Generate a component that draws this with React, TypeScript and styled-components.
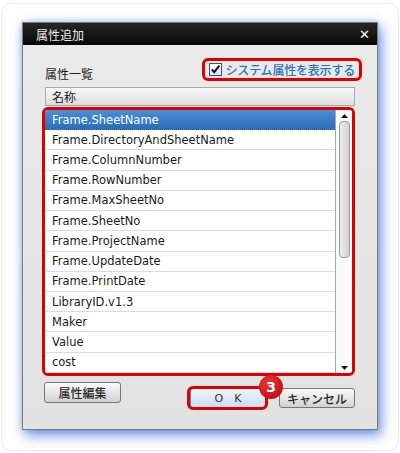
import React from "react";
import styled, { createGlobalStyle } from "styled-components";

const GlobalStyle = createGlobalStyle`
  html, body {
    margin: 0;
    padding: 0;
    background: #ffffff;
  }
  body {
    font-family: "DejaVu Sans", "Noto Sans CJK JP", sans-serif;
  }
`;

const Page = styled.div`
  width: 398px;
  height: 448px;
  margin: 3px 0 0 1px;
  box-sizing: border-box;
  border: 1px solid #ececec;
  border-radius: 10px;
  padding: 18px 0 0 20px;
`;

const Dialog = styled.div`
  width: 356px;
  box-sizing: border-box;
  border: 1px solid #7a7a7a;
  background: #e6e6e6;
  box-shadow: 3px 5px 12px rgba(60, 110, 210, 0.75), 0 0 6px rgba(90, 130, 210, 0.35);
  display: flex;
  flex-direction: column;
`;

const TitleBar = styled.div`
  height: 22px;
  background: linear-gradient(#262626, #080808);
  display: flex;
  align-items: center;
  justify-content: space-between;
  padding: 0 7px 0 13px;
  color: #ececec;
  font-family: "Noto Sans CJK JP", sans-serif;
  font-size: 12px;
`;

const Close = styled.span`
  font-family: "DejaVu Sans", sans-serif;
  font-weight: bold;
  font-size: 13px;
  color: #ffffff;
`;

const Body = styled.div`
  padding: 13px 22px 21px 19px;
  display: flex;
  flex-direction: column;
  background: linear-gradient(#eaeaea, #e2e2e2);
`;

const TopRow = styled.div`
  display: flex;
  justify-content: space-between;
  align-items: flex-end;
  margin-right: -7px;
`;

const Label = styled.div`
  font-family: "Noto Sans CJK JP", sans-serif;
  font-size: 12px;
  color: #222;
  padding-left: 3px;
  margin-bottom: -1px;
`;

const RedFrame = styled.div`
  border: 3px solid #dd0000;
  border-radius: 6px;
`;

const CheckFrame = styled(RedFrame)`
  height: 23px;
  box-sizing: border-box;
  display: flex;
  align-items: center;
  gap: 4px;
  padding: 0 4px 0 4px;
`;

const CheckBox = styled.span`
  width: 13px;
  height: 13px;
  box-sizing: border-box;
  border: 1px solid #2c5584;
  background: linear-gradient(#ffffff, #dbe6f3);
  display: flex;
  align-items: center;
  justify-content: center;
`;

const CheckText = styled.span`
  font-family: "Noto Sans CJK JP", sans-serif;
  font-size: 12px;
  font-weight: 500;
  color: #2a6fc0;
  letter-spacing: -0.2px;
`;

const Header = styled.div`
  margin: 6px 0 0 3px;
  height: 19px;
  box-sizing: border-box;
  border: 1px solid #a9a9a9;
  background: linear-gradient(#f9f9f9, #dedede);
  display: flex;
  align-items: center;
  padding-left: 6px;
  font-family: "Noto Sans CJK JP", sans-serif;
  font-size: 12px;
  color: #222;
`;

const ListFrame = styled(RedFrame)`
  margin-top: 1px;
  height: 269px;
  box-sizing: border-box;
  display: flex;
  background: #ffffff;
  overflow: hidden;
`;

const Rows = styled.div`
  flex: 1;
  display: flex;
  flex-direction: column;
`;

const Row = styled.div<{ $selected?: boolean }>`
  height: 20.23px;
  box-sizing: border-box;
  border-bottom: 1px ${(p) => (p.$selected ? "dotted #1c4f8c" : "solid #dcdcdc")};
  display: flex;
  align-items: center;
  padding-left: 7px;
  font-size: 11.5px;
  color: ${(p) => (p.$selected ? "#ffffff" : "#1a1a1a")};
  background: ${(p) => (p.$selected ? "linear-gradient(#4c8fd6, #2c6cb6)" : "#ffffff")};
`;

const ScrollBar = styled.div`
  width: 17px;
  box-sizing: border-box;
  border-left: 1px solid #a8a8a8;
  display: flex;
  flex-direction: column;
  align-items: center;
  background: #fbfbfb;
`;

const Arrow = styled.div<{ $down?: boolean }>`
  height: 11px;
  display: flex;
  align-items: center;
  justify-content: center;
  margin-top: ${(p) => (p.$down ? "auto" : "0")};
`;

const Thumb = styled.div`
  width: 11px;
  height: 137px;
  box-sizing: border-box;
  border: 1px solid #9a9a9a;
  border-radius: 4px;
  background: linear-gradient(90deg, #ededed, #d2d2d2);
`;

const ButtonRow = styled.div`
  display: flex;
  justify-content: space-between;
  align-items: flex-start;
  margin-top: 6px;
`;

const Button = styled.button<{ $primary?: boolean }>`
  width: 77px;
  height: 21px;
  box-sizing: border-box;
  border: 1px solid ${(p) => (p.$primary ? "#5b84b0" : "#777")};
  border-radius: 3px;
  background: ${(p) =>
    p.$primary
      ? "linear-gradient(#eef5fc, #c9def3)"
      : "linear-gradient(#fafafa, #e6e6e6 50%, #d2d2d2)"};
  font-family: "Noto Sans CJK JP", sans-serif;
  font-size: 12px;
  font-weight: 500;
  color: #2a2a2a;
  padding: 0;
  display: flex;
  align-items: center;
  justify-content: center;
`;

const EditButton = styled(Button)`
  margin-left: 2px;
`;

const SmallButton = styled(Button)`
  width: 76px;
  height: 20px;
`;

const RightGroup = styled.div`
  display: flex;
  gap: 13px;
  margin-top: 6px;
`;

const OkWrap = styled.div`
  position: relative;
`;

const OkMark = styled(RedFrame)`
  position: absolute;
  inset: -2px -2px -2px -3px;
  pointer-events: none;
`;

const Badge = styled.div`
  position: absolute;
  right: -17px;
  top: -13px;
  width: 24px;
  height: 24px;
  border-radius: 50%;
  background: radial-gradient(circle at 40% 35%, #ec3b3b, #c41212 70%, #a50c0c);
  color: #ffffff;
  font-family: "DejaVu Sans", sans-serif;
  font-weight: bold;
  font-size: 14px;
  display: flex;
  align-items: center;
  justify-content: center;
`;

const OkLabel = styled.span`
  font-family: "DejaVu Sans", sans-serif;
  font-size: 11px;
  letter-spacing: 11px;
  margin-right: -11px;
  color: #333;
`;

const items = [
  "Frame.SheetName",
  "Frame.DirectoryAndSheetName",
  "Frame.ColumnNumber",
  "Frame.RowNumber",
  "Frame.MaxSheetNo",
  "Frame.SheetNo",
  "Frame.ProjectName",
  "Frame.UpdateDate",
  "Frame.PrintDate",
  "LibraryID.v1.3",
  "Maker",
  "Value",
  "cost",
];

const App = () => {
  return (
    <>
      <GlobalStyle />
      <Page>
        <Dialog>
          <TitleBar>
            <span>属性追加</span>
            <Close>✕</Close>
          </TitleBar>
          <Body>
            <TopRow>
              <Label>属性一覧</Label>
              <CheckFrame>
                <CheckBox>
                  <svg width="13" height="13" viewBox="0 0 13 13">
                    <path d="M2.2 6.5 L5 9.6 L11 1.8" fill="none" stroke="#111" strokeWidth="2.4" />
                  </svg>
                </CheckBox>
                <CheckText>システム属性を表示する</CheckText>
              </CheckFrame>
            </TopRow>
            <Header>名称</Header>
            <ListFrame>
              <Rows>
                {items.map((x, i) => (
                  <Row key={i} $selected={i === 0}>{x}</Row>
                ))}
              </Rows>
              <ScrollBar>
                <Arrow>
                  <svg width="7" height="4" viewBox="0 0 7 4">
                    <path d="M0 4 L3.5 0 L7 4 Z" fill="#111" />
                  </svg>
                </Arrow>
                <Thumb />
                <Arrow $down>
                  <svg width="7" height="4" viewBox="0 0 7 4">
                    <path d="M0 0 L3.5 4 L7 0 Z" fill="#111" />
                  </svg>
                </Arrow>
              </ScrollBar>
            </ListFrame>
            <ButtonRow>
              <EditButton>属性編集</EditButton>
              <RightGroup>
                <OkWrap>
                  <SmallButton $primary>
                    <OkLabel>OK</OkLabel>
                  </SmallButton>
                  <OkMark />
                  <Badge>3</Badge>
                </OkWrap>
                <SmallButton>キャンセル</SmallButton>
              </RightGroup>
            </ButtonRow>
          </Body>
        </Dialog>
      </Page>
    </>
  );
};

export default App;
